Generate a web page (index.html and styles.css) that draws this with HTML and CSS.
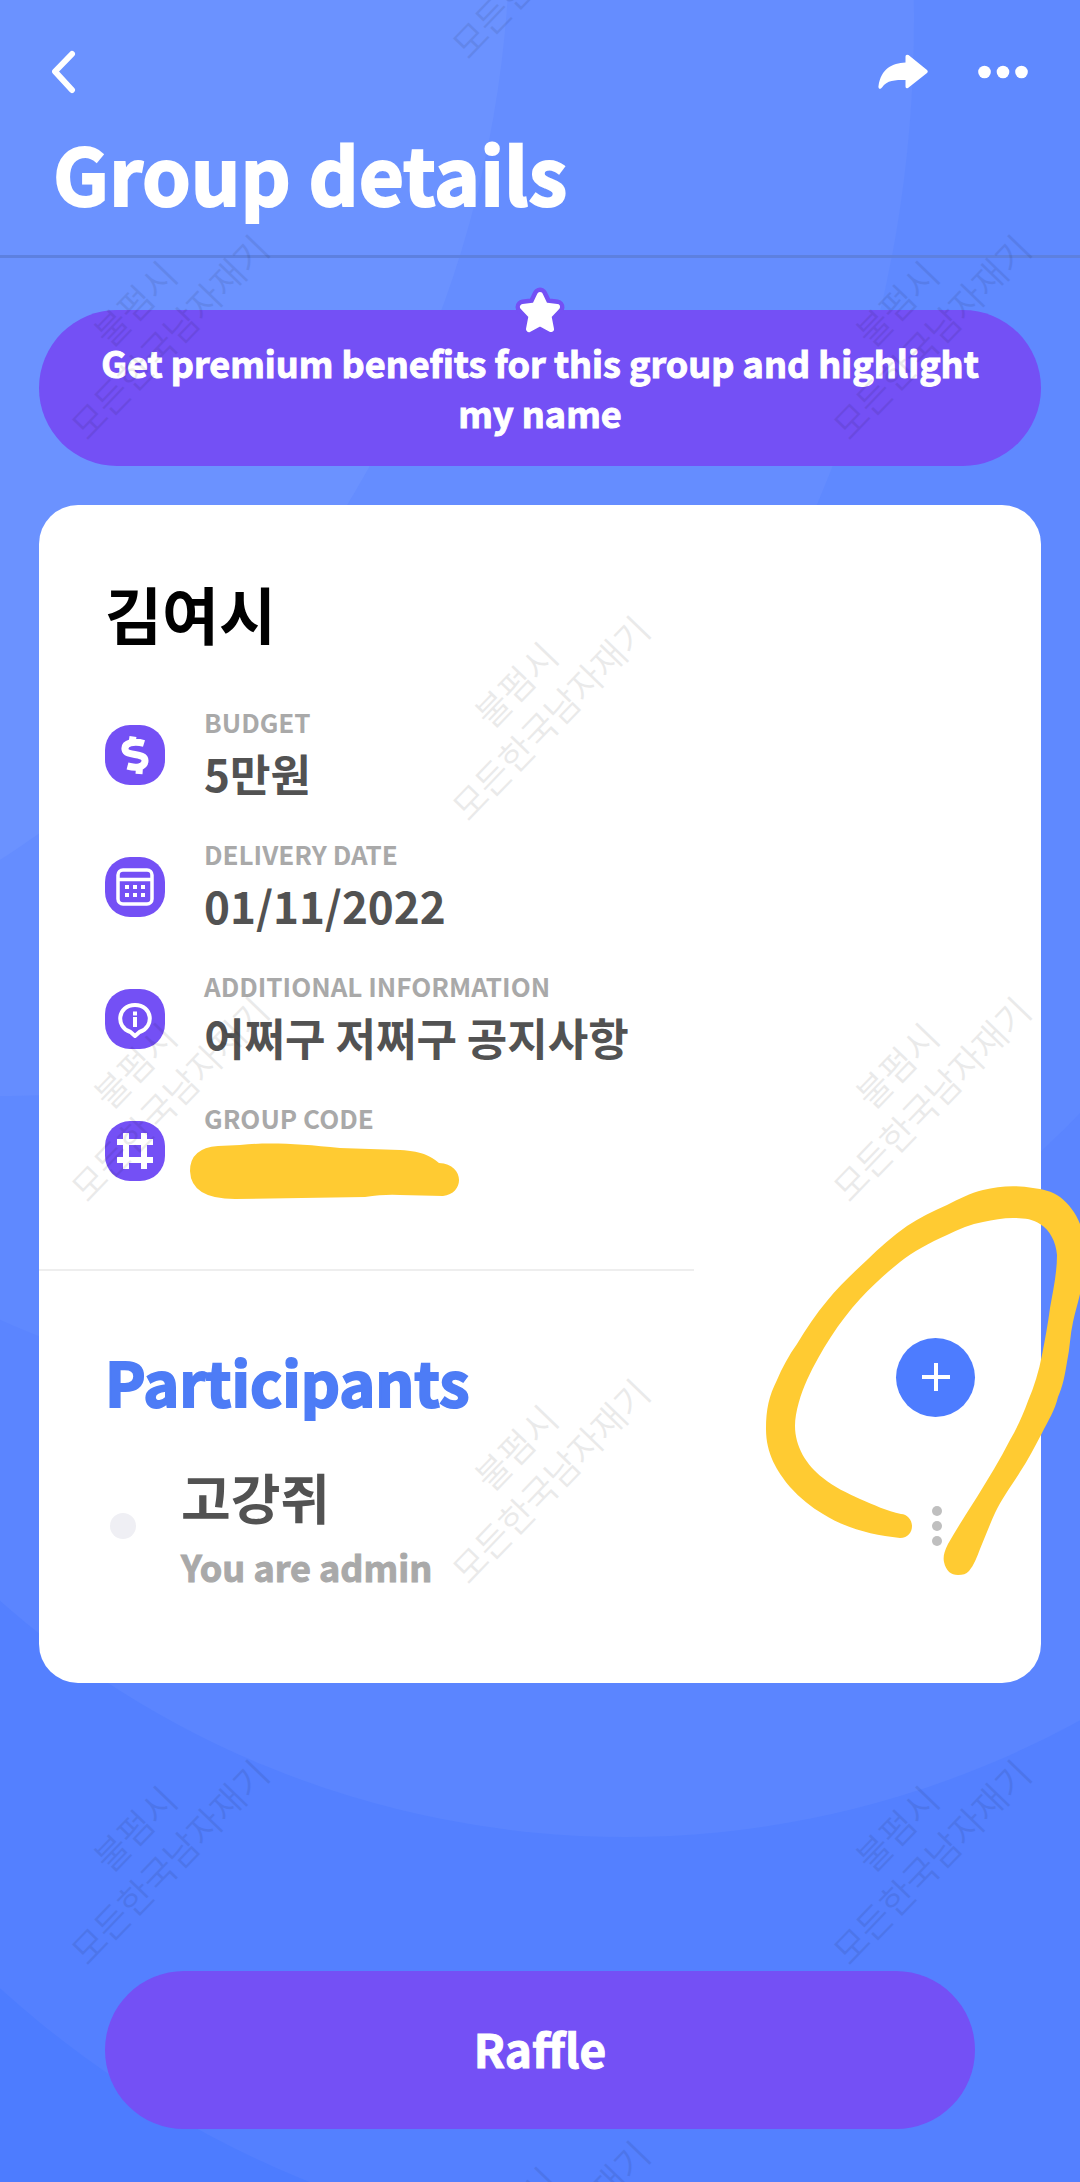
FILE: index.html
```html
<!DOCTYPE html>
<html lang="en">
<head>
<meta charset="utf-8">
<meta name="viewport" content="width=device-width, initial-scale=1">
<title>Group details</title>
<link rel="stylesheet" href="styles.css">
</head>
<body>
<div class="screen">
  <svg class="backdrop" viewBox="0 0 1080 2182" preserveAspectRatio="none" aria-hidden="true">
    <rect width="1080" height="2182" fill="#4d7cff"/>
    <circle cx="697" cy="1219" r="1038" fill="#5480ff"/>
    <circle cx="625" cy="892" r="945" fill="#5b85ff"/>
    <circle cx="394" cy="453" r="952" fill="#5f89ff"/>
    <ellipse cx="10" cy="20" rx="904" ry="1076" fill="#658dff"/>
    <circle cx="-600" cy="-74" r="1110" fill="#6b92ff"/>
  </svg>

  <header class="header">
    <div class="toolbar">
      <button class="icon-button" type="button" aria-label="Back">
        <svg width="26" height="44" viewBox="0 0 26 44"><path d="M20 4 3 21.500 20 40" fill="none" stroke="#fff" stroke-width="6" stroke-linecap="round" stroke-linejoin="round"/></svg>
      </button>
      <div class="toolbar-actions">
        <button class="icon-button" type="button" aria-label="Share">
          <svg width="50" height="36" viewBox="0 0 50 36"><path d="M27.500 2.500q0-2.500 3-1.500L49 16q1.500 1.500 0 3L30 34q-2.500 1-2.500-1.500V26C17 26 9 26 4 33.500 2 36 0 34.500.5 32 3 15 14 9 27.500 8.500Z" fill="#fff"/></svg>
        </button>
        <button class="icon-button" type="button" aria-label="More options">
          <svg width="50" height="14" viewBox="0 0 50 14" fill="#fff"><circle cx="6.500" cy="7" r="6.300"/><circle cx="25" cy="7" r="6.300"/><circle cx="43.500" cy="7" r="6.300"/></svg>
        </button>
      </div>
    </div>
    <h1 class="title">Group details</h1>
  </header>

  <main class="content">
    <button class="premium" type="button">
      <svg class="premium-star" width="52" height="48" viewBox="0 0 52 48" aria-hidden="true">
        <path d="M26 7 31 17.500 43 19 34.500 27.500 37 39.500 26 34 15 39.500 17.500 27.500 9 19 21 17.500Z" fill="#7450f5" stroke="#7450f5" stroke-width="15" stroke-linejoin="round"/>
        <path d="M26 7 31 17.500 43 19 34.500 28 37 41 26 35 15 41 17.500 28 9 19 21 17.500Z" fill="#fff" stroke="#fff" stroke-width="6" stroke-linejoin="round"/>
      </svg>
      Get premium benefits for this group and highlight my name
    </button>

    <section class="card">
      <div class="details">
        <h2 class="group-name">김여시</h2>
        <dl class="facts">
          <div class="fact">
            <svg class="badge" viewBox="0 0 60 60" aria-hidden="true"><rect width="60" height="60" rx="25" fill="#7450f5"/><path d="M39 18.500C29 15.500 19 18 20 24.500 21 32 40 27 40 35.500 40 43 30 43 22.500 41M28 11.500 27 18M34.500 42 34 49" fill="none" stroke="#fff" stroke-width="7"/></svg>
            <dt>BUDGET</dt>
            <dd>5만원</dd>
          </div>
          <div class="fact">
            <svg class="badge" viewBox="0 0 60 60" aria-hidden="true"><rect width="60" height="60" rx="25" fill="#7450f5"/><g fill="none" stroke="#fff" stroke-width="3.500"><rect x="13" y="13" width="34" height="34" rx="5"/><path d="M13 22.500H47"/></g><path d="M22 28v4M30 28v4M38 28v4M22 36v4M30 36v4M38 36v4" stroke="#fff" stroke-width="4"/></svg>
            <dt>DELIVERY DATE</dt>
            <dd>01/11/2022</dd>
          </div>
          <div class="fact">
            <svg class="badge" viewBox="0 0 60 60" aria-hidden="true"><rect width="60" height="60" rx="25" fill="#7450f5"/><path d="M30 47 25.500 43C10 38 12.500 16 30 16S50 38 34.500 43Z" fill="none" stroke="#fff" stroke-width="4" stroke-linejoin="round"/><path d="M30 22.500v4M30 28v10" stroke="#fff" stroke-width="4"/></svg>
            <dt>ADDITIONAL INFORMATION</dt>
            <dd>어쩌구 저쩌구 공지사항</dd>
          </div>
          <div class="fact">
            <svg class="badge" viewBox="0 0 60 60" aria-hidden="true"><rect width="60" height="60" rx="25" fill="#7450f5"/><path d="M21 12V48M39 12V48M12 21H48M12 39H48" stroke="#fff" stroke-width="6"/></svg>
            <dt>GROUP CODE</dt>
            <dd class="code"><svg class="marker" width="270" height="58" viewBox="0 0 270 58" role="img" aria-label="Hidden code"><path d="M28 3Q0 5 0 28 1 56 45 56L175 54Q195 51 210 52L253 53C275 51 275 21 249 20C243 15 234 8 210 7L150 5C110 1 80-1 50 2Z" fill="#ffcb32"/></svg></dd>
          </div>
        </dl>
      </div>

      <div class="participants">
        <div class="participants-head">
          <h2 class="section-title">Participants</h2>
          <button class="add" type="button" aria-label="Add participant">
            <svg width="28" height="28" viewBox="0 0 28 28"><path d="M14 0V28M0 14H28" stroke="#fff" stroke-width="4"/></svg>
          </button>
        </div>
        <div class="person">
          <span class="status"></span>
          <div class="person-text">
            <p class="person-name">고강쥐</p>
            <p class="person-role">You are admin</p>
          </div>
          <button class="icon-button person-menu" type="button" aria-label="Participant options">
            <svg width="10" height="40" viewBox="0 0 10 40" fill="#bfbfbf"><circle cx="5" cy="5" r="5"/><circle cx="5" cy="20" r="5"/><circle cx="5" cy="35" r="5"/></svg>
          </button>
        </div>
      </div>
      <svg class="loop" width="320" height="400" viewBox="0 0 320 400" aria-hidden="true"><path d="M141 333C127 330 114 324 100 318 87 312 74 306 63 297 46 284 35 265 35 245 35 231 41 212 47 199 61 169 79 141 100 118 112 105 126 92 140 81 154 70 169 62 187 54 199 48 211 43 223 41 233 39 243 37 253 37 263 37 273 38 280 43 290 49 296 61 297 74 297 92 293 110 290 127 288 143 285 158 282 174 279 190 274 206 268 220 263 234 257 247 250 259 240 279 228 298 217 316 207 332 197 347 188 363 184 371 183 376 184 381 186 390 191 394 198 394 203 394 206 393 209 390 214 384 217 376 220 368 225 356 230 343 235 332 242 317 252 304 260 291 268 279 275 265 282 252 288 240 295 229 298 216 303 205 305 193 307 181 310 167 310 154 313 141 315 131 318 122 320 113L325 77 320 43C316 32 308 22 300 16 292 10 282 8 273 7 256 4 239 5 223 9 210 12 199 18 187 24 173 30 159 37 147 45 133 55 119 67 107 79 93 92 79 105 67 120 56 133 46 148 37 163 29 174 22 187 17 199 9 215 6 228 6 248 6 273 17 290 30 306 40 317 51 326 63 333 87 348 113 354 140 357 148 357 152 351 152 345 152 339 147 333 141 333Z" fill="#ffcb32"/></svg>
    </section>
  </main>

  <footer class="footer">
    <button class="raffle" type="button">Raffle</button>
  </footer>

  <div class="watermarks" aria-hidden="true">
    <p class="wm wm-a">불펌시<br>모든한국남자재기</p>
    <p class="wm wm-b">불펌시<br>모든한국남자재기</p>
    <p class="wm wm-c">불펌시<br>모든한국남자재기</p>
    <p class="wm wm-d">불펌시<br>모든한국남자재기</p>
    <p class="wm wm-e">불펌시<br>모든한국남자재기</p>
    <p class="wm wm-f">불펌시<br>모든한국남자재기</p>
    <p class="wm wm-g">불펌시<br>모든한국남자재기</p>
    <p class="wm wm-h">불펌시<br>모든한국남자재기</p>
    <p class="wm wm-i">불펌시<br>모든한국남자재기</p>
    <p class="wm wm-j">불펌시<br>모든한국남자재기</p>
  </div>
</div>
</body>
</html>
```
FILE: styles.css
```css
* { box-sizing: border-box; }

body {
  margin: 0;
  font-family: "Noto Sans CJK KR", "Noto Sans", sans-serif;
  font-weight: 700;
}

h1, h2, p, dl, dd { margin: 0; }

button {
  font: inherit;
  border: 0;
  padding: 0;
  cursor: pointer;
}

svg { display: block; }

.screen {
  position: relative;
  min-height: 100vh;
  overflow: hidden;
  display: flex;
  flex-direction: column;
  background: #4d7cff;
}

.backdrop {
  position: absolute;
  inset: 0;
  width: 100%;
  height: 100%;
}

.header {
  position: relative;
  padding: 50px 52px 33px;
  border-bottom: 3px solid #5d80e0;
}

.toolbar,
.toolbar-actions {
  display: flex;
  align-items: center;
  justify-content: space-between;
}

.toolbar-actions { gap: 50px; }

.icon-button { background: none; }

.title {
  margin-top: 28px;
  padding-left: 1px;
  font-size: 78px;
  line-height: 100px;
  color: #fff;
  -webkit-text-stroke: 2px #fff;
}

.content {
  position: relative;
  padding: 52px 39px 0;
}

.premium {
  position: relative;
  display: block;
  width: 100%;
  padding: 27px 60px 29px;
  border-radius: 78px;
  background: #7450f5;
  color: #fff;
  font-size: 36px;
  line-height: 50px;
  -webkit-text-stroke: 1px #fff;
}

.premium-star {
  position: absolute;
  top: -22px;
  left: 50%;
  margin-left: -26px;
  overflow: visible;
}

.card {
  position: relative;
  margin-top: 39px;
  border-radius: 39px;
  background: #fff;
}

.details {
  padding: 62px 66px 70px;
  background: linear-gradient(#eee, #eee) left bottom / 655px 2px no-repeat;
}

.group-name {
  font-size: 62px;
  line-height: 92px;
  color: #000;
}

.facts {
  display: grid;
  gap: 32px;
  margin-top: 46px;
}

.fact {
  display: grid;
  grid-template-columns: 60px 1fr;
  gap: 2px 39px;
  align-items: center;
}

.badge {
  grid-row: span 2;
  width: 60px;
  height: 60px;
}

.fact dt {
  font-size: 26px;
  line-height: 34px;
  color: #a9a9a9;
}

.fact dd {
  font-size: 44px;
  line-height: 64px;
  color: #525252;
}

.fact .code {
  height: 64px;
  padding-top: 6px;
}

.marker { margin-left: -14px; }

.participants { padding: 54px 66px 88px; }

.participants-head {
  display: flex;
  align-items: center;
  justify-content: space-between;
}

.section-title {
  padding-top: 8px;
  font-size: 61px;
  line-height: 96px;
  color: #4d7cf6;
  -webkit-text-stroke: 2px #4d7cf6;
}

.add {
  display: grid;
  place-items: center;
  width: 79px;
  height: 79px;
  border-radius: 50%;
  background: #4d7cff;
}

.person {
  display: flex;
  align-items: center;
  margin-top: 28px;
}

.status {
  width: 26px;
  height: 26px;
  margin: 0 45px 0 5px;
  border-radius: 50%;
  background: #efeff4;
}

.person-text { flex: 1; }

.person-name {
  font-size: 54px;
  line-height: 80px;
  color: #525252;
}

.person-role {
  font-size: 36px;
  line-height: 58px;
  color: #a9a9a9;
  -webkit-text-stroke: 1px #a9a9a9;
}

.person-menu { margin-right: 33px; }

.loop {
  position: absolute;
  right: -39px;
  bottom: 102px;
  overflow: visible;
}

.footer {
  position: relative;
  margin-top: auto;
  padding: 0 105px 53px;
}

.raffle {
  width: 100%;
  height: 158px;
  padding-bottom: 4px;
  border-radius: 79px;
  background: #7450f5;
  color: #fff;
  font-size: 46px;
  -webkit-text-stroke: 1px #fff;
}

.watermarks {
  position: absolute;
  inset: 0;
  pointer-events: none;
  overflow: hidden;
}

.wm {
  position: absolute;
  width: 320px;
  margin: -48px 0 0 -160px;
  font-size: 36px;
  font-weight: 350;
  line-height: 48px;
  text-align: center;
  color: #000;
  opacity: 0.08;
  transform: rotate(-46deg);
}

.wm-a { left: 532px; top: -62px; }
.wm-b { left: 151px; top: 319px; }
.wm-c { left: 913px; top: 319px; }
.wm-d { left: 532px; top: 700px; }
.wm-e { left: 151px; top: 1081px; }
.wm-f { left: 913px; top: 1081px; }
.wm-g { left: 532px; top: 1463px; }
.wm-h { left: 151px; top: 1844px; }
.wm-i { left: 913px; top: 1844px; }
.wm-j { left: 532px; top: 2225px; }
```
